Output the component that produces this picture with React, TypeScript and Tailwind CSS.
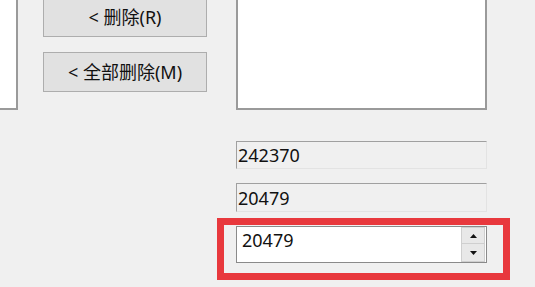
import React from "react";

export default function App() {
  const font = { fontFamily: '"Noto Sans", "Noto Sans CJK SC", sans-serif' };
  return (
    <div className="w-[535px] h-[287px] bg-[#f0f0f0] overflow-hidden flex" style={font}>
      {/* left listbox */}
      <div className="w-[18px] h-[110px] bg-white border-r-2 border-b-2 border-[#9a9a9a] shrink-0" />

      {/* buttons */}
      <div className="ml-[25px] w-[164px] flex flex-col gap-[15px] -mt-[3px] shrink-0">
        <button className="h-[40px] w-full bg-[#e1e1e1] border border-[#adadad] text-[18px] text-[#111] flex items-center justify-center leading-none">
          &lt; 删除(R)
        </button>
        <button className="h-[40px] w-full bg-[#e1e1e1] border border-[#adadad] text-[18px] text-[#111] flex items-center justify-center leading-none">
          &lt; 全部删除(M)
        </button>
      </div>

      {/* right column */}
      <div className="ml-[10px] w-[293px] flex flex-col shrink-0">
        <div className="ml-[19px] w-[251px] h-[110px] bg-white border-2 border-t-0 border-[#9a9a9a]" />
        <div className="ml-[19px] mt-[31px] w-[251px] h-[28px] border border-t-[#a0a0a0] border-l-[#a0a0a0] border-r-[#e3e3e3] border-b-[#e3e3e3] flex items-center pl-[1px] text-[18px] text-[#111] leading-none">
          242370
        </div>
        <div className="ml-[19px] mt-[14px] w-[251px] h-[29px] border border-t-[#a0a0a0] border-l-[#a0a0a0] border-r-[#e3e3e3] border-b-[#e3e3e3] flex items-center pl-[1px] text-[18px] text-[#111] leading-none">
          20479
        </div>
        <div className="mt-[6px] w-[293px] h-[62px] border-[7px] border-[#e8383d] pl-[12px] pt-[1px]">
          <div className="w-[251px] h-[37px] bg-white border border-[#8a8a8a] flex">
            <div className="flex-1 pl-[5px] pt-[1px] text-[18px] text-[#111] leading-[24px]">20479</div>
            <div className="w-[24px] mr-[1px] flex flex-col">
              <div className="h-[17px] bg-[#e8e8e8] border border-[#cfcfcf] flex items-center justify-center">
                <svg width="7" height="4" viewBox="0 0 7 4"><path d="M3.5 0L7 4H0Z" fill="#111" /></svg>
              </div>
              <div className="h-[18px] bg-[#e8e8e8] border border-t-0 border-[#cfcfcf] flex items-center justify-center">
                <svg width="7" height="4" viewBox="0 0 7 4"><path d="M0 0H7L3.5 4Z" fill="#111" /></svg>
              </div>
            </div>
          </div>
        </div>
      </div>
    </div>
  );
}
